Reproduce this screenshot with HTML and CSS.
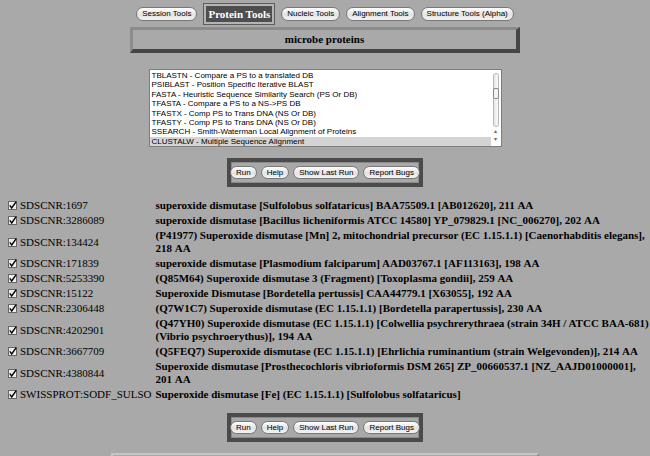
FILE: index.html
```html
<!DOCTYPE html>
<html lang="en">
<head>
    <meta charset="UTF-8">
    <title>Protein Tools</title>
    <link rel="stylesheet" href="styles.css">
</head>
<body>
    <div class="tabs">
        <button class="pill">Session Tools</button>
        <div class="current">Protein Tools</div>
        <button class="pill">Nucleic Tools</button>
        <button class="pill">Alignment Tools</button>
        <button class="pill">Structure Tools (Alpha)</button>
    </div>

    <div class="title">microbe proteins</div>

    <!-- tool picker -->
    <div class="listbox">
        <div class="opts">
            <div class="opt">TBLASTN - Compare a PS to a translated DB</div>
            <div class="opt">PSIBLAST - Position Specific Iterative BLAST</div>
            <div class="opt">FASTA - Heuristic Sequence Similarity Search (PS Or DB)</div>
            <div class="opt">TFASTA - Compare a PS to a NS-&gt;PS DB</div>
            <div class="opt">TFASTX - Comp PS to Trans DNA (NS Or DB)</div>
            <div class="opt">TFASTY - Comp PS to Trans DNA (NS Or DB)</div>
            <div class="opt">SSEARCH - Smith-Waterman Local Alignment of Proteins</div>
            <div class="opt sel">CLUSTALW - Multiple Sequence Alignment</div>
        </div>
        <div class="scroll">
            <div class="track"><div class="thumb"></div></div>
            <div class="arrow">&#9652;</div>
            <div class="arrow">&#9662;</div>
        </div>
    </div>

    <div class="runbar">
        <button class="pill">Run</button>
        <button class="pill">Help</button>
        <button class="pill">Show Last Run</button>
        <button class="pill">Report Bugs</button>
    </div>

    <table class="hits">
        <tr><td class="acc"><svg class="cb" width="9" height="9" viewBox="0 0 9 9"><rect x=".5" y=".5" width="8" height="8" fill="#eee" stroke="#666"/><path d="M1.8 4.3 L3.7 7 L8.2 .6" stroke="#000" stroke-width="1.4" fill="none"/></svg>SDSCNR:1697</td>
            <td class="desc">superoxide dismutase [Sulfolobus solfataricus] BAA75509.1 [AB012620], 211&nbsp;AA</td></tr>
        <tr><td class="acc"><svg class="cb" width="9" height="9" viewBox="0 0 9 9"><rect x=".5" y=".5" width="8" height="8" fill="#eee" stroke="#666"/><path d="M1.8 4.3 L3.7 7 L8.2 .6" stroke="#000" stroke-width="1.4" fill="none"/></svg>SDSCNR:3286089</td>
            <td class="desc">superoxide dismutase [Bacillus licheniformis ATCC 14580] YP_079829.1 [NC_006270], 202&nbsp;AA</td></tr>
        <tr><td class="acc"><svg class="cb" width="9" height="9" viewBox="0 0 9 9"><rect x=".5" y=".5" width="8" height="8" fill="#eee" stroke="#666"/><path d="M1.8 4.3 L3.7 7 L8.2 .6" stroke="#000" stroke-width="1.4" fill="none"/></svg>SDSCNR:134424</td>
            <td class="desc">(P41977) Superoxide dismutase [Mn] 2, mitochondrial precursor (EC 1.15.1.1) [Caenorhabditis elegans], 218&nbsp;AA</td></tr>
        <tr><td class="acc"><svg class="cb" width="9" height="9" viewBox="0 0 9 9"><rect x=".5" y=".5" width="8" height="8" fill="#eee" stroke="#666"/><path d="M1.8 4.3 L3.7 7 L8.2 .6" stroke="#000" stroke-width="1.4" fill="none"/></svg>SDSCNR:171839</td>
            <td class="desc">superoxide dismutase [Plasmodium falciparum] AAD03767.1 [AF113163], 198&nbsp;AA</td></tr>
        <tr><td class="acc"><svg class="cb" width="9" height="9" viewBox="0 0 9 9"><rect x=".5" y=".5" width="8" height="8" fill="#eee" stroke="#666"/><path d="M1.8 4.3 L3.7 7 L8.2 .6" stroke="#000" stroke-width="1.4" fill="none"/></svg>SDSCNR:5253390</td>
            <td class="desc">(Q85M64) Superoxide dismutase 3 (Fragment) [Toxoplasma gondii], 259&nbsp;AA</td></tr>
        <tr><td class="acc"><svg class="cb" width="9" height="9" viewBox="0 0 9 9"><rect x=".5" y=".5" width="8" height="8" fill="#eee" stroke="#666"/><path d="M1.8 4.3 L3.7 7 L8.2 .6" stroke="#000" stroke-width="1.4" fill="none"/></svg>SDSCNR:15122</td>
            <td class="desc">Superoxide Dismutase [Bordetella pertussis] CAA44779.1 [X63055], 192&nbsp;AA</td></tr>
        <tr><td class="acc"><svg class="cb" width="9" height="9" viewBox="0 0 9 9"><rect x=".5" y=".5" width="8" height="8" fill="#eee" stroke="#666"/><path d="M1.8 4.3 L3.7 7 L8.2 .6" stroke="#000" stroke-width="1.4" fill="none"/></svg>SDSCNR:2306448</td>
            <td class="desc">(Q7W1C7) Superoxide dismutase (EC 1.15.1.1) [Bordetella parapertussis], 230&nbsp;AA</td></tr>
        <tr><td class="acc"><svg class="cb" width="9" height="9" viewBox="0 0 9 9"><rect x=".5" y=".5" width="8" height="8" fill="#eee" stroke="#666"/><path d="M1.8 4.3 L3.7 7 L8.2 .6" stroke="#000" stroke-width="1.4" fill="none"/></svg>SDSCNR:4202901</td>
            <td class="desc">(Q47YH0) Superoxide dismutase (EC 1.15.1.1) [Colwellia psychrerythraea (strain 34H / ATCC BAA&#8209;681) (Vibrio psychroerythus)], 194&nbsp;AA</td></tr>
        <tr><td class="acc"><svg class="cb" width="9" height="9" viewBox="0 0 9 9"><rect x=".5" y=".5" width="8" height="8" fill="#eee" stroke="#666"/><path d="M1.8 4.3 L3.7 7 L8.2 .6" stroke="#000" stroke-width="1.4" fill="none"/></svg>SDSCNR:3667709</td>
            <td class="desc">(Q5FEQ7) Superoxide dismutase (EC 1.15.1.1) [Ehrlichia ruminantium (strain Welgevonden)], 214&nbsp;AA</td></tr>
        <tr><td class="acc"><svg class="cb" width="9" height="9" viewBox="0 0 9 9"><rect x=".5" y=".5" width="8" height="8" fill="#eee" stroke="#666"/><path d="M1.8 4.3 L3.7 7 L8.2 .6" stroke="#000" stroke-width="1.4" fill="none"/></svg>SDSCNR:4380844</td>
            <td class="desc">Superoxide dismutase [Prosthecochloris vibrioformis DSM 265] ZP_00660537.1 [NZ_AAJD01000001], 201&nbsp;AA</td></tr>
        <tr><td class="acc"><svg class="cb" width="9" height="9" viewBox="0 0 9 9"><rect x=".5" y=".5" width="8" height="8" fill="#eee" stroke="#666"/><path d="M1.8 4.3 L3.7 7 L8.2 .6" stroke="#000" stroke-width="1.4" fill="none"/></svg>SWISSPROT:SODF_SULSO</td>
            <td class="desc">Superoxide dismutase [Fe] (EC 1.15.1.1) [Sulfolobus solfataricus]</td></tr>
    </table>

    <div class="runbar">
        <button class="pill">Run</button>
        <button class="pill">Help</button>
        <button class="pill">Show Last Run</button>
        <button class="pill">Report Bugs</button>
    </div>

    <div class="footbar"></div>
</body>
</html>
```

FILE: styles.css
```css
body {
    margin: 0;
    background: #a9a9a9;
    font-family: "Liberation Serif", "Times New Roman", serif;
    color: #000;
    overflow: hidden;
}
.tabs {
    display: flex;
    justify-content: center;
    align-items: center;
    gap: 6px;
    padding-top: 3px;
}
.pill {
    height: 14px;
    padding: 0 5px;
    margin: 0;
    border: 1px solid #777;
    border-radius: 8px;
    background: linear-gradient(#ffffff, #e2e2e2 55%, #f4f4f4);
    font-family: "Liberation Sans", Arial, sans-serif;
    font-size: 8px;
    line-height: 12px;
    color: #000;
    white-space: nowrap;
}
.current {
    height: 22px;
    box-sizing: border-box;
    padding: 0 4px;
    background: #4e4e4e;
    border: 1px solid #5c5c5c;
    box-shadow: inset 0 0 0 2px #b4b4b4;
    color: #fff;
    font-weight: bold;
    font-size: 11px;
    line-height: 20px;
    white-space: nowrap;
}
.title {
    width: 390px;
    height: 26px;
    box-sizing: border-box;
    margin: 2px auto 0;
    border-style: solid;
    border-width: 3px 4px 4px 3px;
    border-color: #8c8c8c #454545 #454545 #8c8c8c;
    text-align: center;
    font-weight: bold;
    font-size: 11px;
    line-height: 19px;
}
.listbox {
    width: 353px;
    height: 78px;
    box-sizing: border-box;
    margin: 16px auto 0;
    background: #fff;
    border: 1px solid #7d7d7d;
    display: flex;
}
.opts {
    flex: 1;
    padding-top: 1px;
    font-family: "Liberation Sans", Arial, sans-serif;
    font-size: 8px;
    line-height: 9.4px;
    color: #000;
}
.opt {
    padding-left: 2px;
    white-space: nowrap;
}
.opt.sel {
    background: #d4d4d4;
}
.scroll {
    width: 10px;
    display: flex;
    flex-direction: column;
    align-items: center;
    padding-top: 3px;
}
.track {
    width: 6px;
    height: 54px;
    box-sizing: border-box;
    border: 1px solid #b5b5b5;
    border-radius: 3px;
    background: linear-gradient(90deg, #e6e6e6, #fafafa);
}
.thumb {
    width: 6px;
    height: 11px;
    box-sizing: border-box;
    margin: 14px 0 0 -1px;
    border: 1px solid #888;
    border-radius: 2px;
    background: #f4f4f4;
}
.arrow {
    font-size: 6px;
    line-height: 8px;
    color: #666;
}
.runbar {
    width: 196px;
    box-sizing: border-box;
    margin: 11px auto 0;
    border: 4px solid #4b4b4b;
    box-shadow: inset 0 0 0 1px #8a8a8a;
    padding: 4px 2px;
    display: flex;
    justify-content: center;
    gap: 4px;
}
.runbar .pill {
    height: 13px;
    line-height: 11px;
}
.hits {
    width: max-content;
    margin: 11px 0 0 6px;
    border-collapse: collapse;
    font-size: 11px;
    line-height: 13px;
}
.hits td {
    padding: 1px 2px;
    vertical-align: middle;
}
.acc {
    white-space: nowrap;
}
.cb {
    margin-right: 3px;
    vertical-align: -1px;
}
.desc {
    width: 496px;
    font-weight: bold;
}
.footbar {
    width: 428px;
    height: 20px;
    box-sizing: border-box;
    margin: 11px auto 0;
    border-top: 2px solid #c6c6c6;
    border-left: 2px solid #c6c6c6;
    border-right: 2px solid #8c8c8c;
}
```
